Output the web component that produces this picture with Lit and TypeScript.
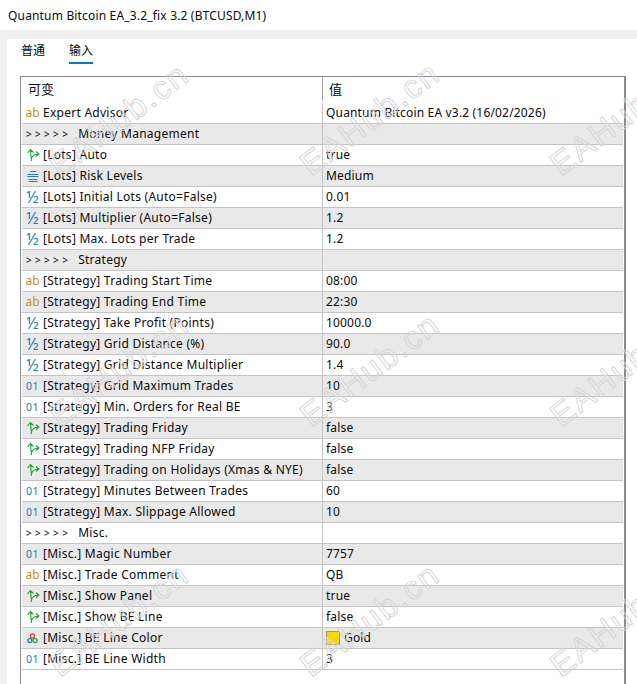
import {html, css, LitElement, svg} from 'lit';
import {customElement} from 'lit/decorators.js';

type Row = {icon: string; name: string; value: string; swatch?: boolean};

const rows: Row[] = [
  {icon: 'ab', name: 'Expert Advisor', value: 'Quantum Bitcoin EA v3.2 (16/02/2026)'},
  {icon: '', name: 'Money Management', value: ''},
  {icon: 'bool', name: '[Lots] Auto', value: 'true'},
  {icon: 'enum', name: '[Lots] Risk Levels', value: 'Medium'},
  {icon: 'half', name: '[Lots] Initial Lots (Auto=False)', value: '0.01'},
  {icon: 'half', name: '[Lots] Multiplier (Auto=False)', value: '1.2'},
  {icon: 'half', name: '[Lots] Max. Lots per Trade', value: '1.2'},
  {icon: '', name: 'Strategy', value: ''},
  {icon: 'ab', name: '[Strategy] Trading Start Time', value: '08:00'},
  {icon: 'ab', name: '[Strategy] Trading End Time', value: '22:30'},
  {icon: 'half', name: '[Strategy] Take Profit (Points)', value: '10000.0'},
  {icon: 'half', name: '[Strategy] Grid Distance (%)', value: '90.0'},
  {icon: 'half', name: '[Strategy] Grid Distance Multiplier', value: '1.4'},
  {icon: '01', name: '[Strategy] Grid Maximum Trades', value: '10'},
  {icon: '01', name: '[Strategy] Min. Orders for Real BE', value: '3'},
  {icon: 'bool', name: '[Strategy] Trading Friday', value: 'false'},
  {icon: 'bool', name: '[Strategy] Trading NFP Friday', value: 'false'},
  {icon: 'bool', name: '[Strategy] Trading on Holidays (Xmas & NYE)', value: 'false'},
  {icon: '01', name: '[Strategy] Minutes Between Trades', value: '60'},
  {icon: '01', name: '[Strategy] Max. Slippage Allowed', value: '10'},
  {icon: '', name: 'Misc.', value: ''},
  {icon: '01', name: '[Misc.] Magic Number', value: '7757'},
  {icon: 'ab', name: '[Misc.] Trade Comment', value: 'QB'},
  {icon: 'bool', name: '[Misc.] Show Panel', value: 'true'},
  {icon: 'bool', name: '[Misc.] Show BE Line', value: 'false'},
  {icon: 'color', name: '[Misc.] BE Line Color', value: 'Gold', swatch: true},
  {icon: '01', name: '[Misc.] BE Line Width', value: '3'},
];

// start points of the rotated watermark text
const marks = [
  [60, 178], [311, 177], [561, 177],
  [60, 428], [311, 428], [561, 428],
  [60, 678], [311, 678], [561, 678],
];

@customElement('app-root')
export class AppRoot extends LitElement {
  static styles = css`
    :host {
      display: block;
      position: relative;
      width: 637px;
      height: 684px;
      overflow: hidden;
      background: #f0f0f0;
      font-family: 'Noto Sans', 'Noto Sans CJK SC', sans-serif;
      font-size: 12px;
      color: #0a0a0a;
    }
    .title {
      height: 30px;
      background: #fff;
      display: flex;
      align-items: center;
      padding-left: 8px;
      letter-spacing: 0.17px;
    }
    .body {
      margin: 9px 0 0 7px;
      height: 645px;
      background: #fff;
      box-sizing: border-box;
      padding-left: 13px;
    }
    .tabs {
      display: flex;
      height: 37px;
      box-sizing: border-box;
      padding: 1px 0 0 1px;
      gap: 24px;
    }
    .tab {
      height: 24px;
      line-height: 22px;
      box-sizing: border-box;
    }
    .tab.on {
      border-bottom: 2px solid #0078d7;
    }
    .table {
      width: 606px;
      height: 640px;
      box-sizing: border-box;
      border: 1px solid #868a91;
      border-width: 1px 2px 0 1px;
      padding-left: 1px;
    }
    .head {
      display: grid;
      grid-template-columns: 300px 1fr;
      height: 26px;
      font-size: 13px;
    }
    .head div {
      padding-left: 6px;
      line-height: 25px;
    }
    .head div + div {
      border-left: 1px solid #a0a0a0;
      height: 24px;
      padding-left: 6px;
    }
    .row {
      display: grid;
      grid-template-columns: 300px 1fr;
      height: 21px;
      box-sizing: border-box;
      border-bottom: 1px solid #c4c4c4;
      margin-right: 1px;
      line-height: 20px;
    }
    .row:nth-child(odd) {
      background: #e9e9e9;
    }
    .name {
      display: flex;
      align-items: center;
      white-space: pre;
      letter-spacing: 0.26px;
    }
    .ico {
      width: 21px;
      height: 20px;
      flex: none;
      display: flex;
      align-items: center;
      justify-content: center;
      letter-spacing: 0;
    }
    .ab { color: #c8922e; font-size: 12px; }
    .num { color: #2a78b0; font-size: 10.5px; letter-spacing: 0.4px; }
    .half { color: #2a78b0; font-size: 16px; }
    .group {
      padding-left: 4px;
    }
    .chevrons {
      font-size: 10px;
      word-spacing: 0.2px;
      margin-right: 10px;
    }
    .val {
      border-left: 1px solid #c4c4c4;
      padding-left: 3px;
      display: flex;
      align-items: center;
      gap: 4px;
      letter-spacing: 0.17px;
    }
    .swatch {
      width: 12px;
      height: 12px;
      background: #ffd700;
      border: 1px solid #a8995c;
    }
    .marks {
      position: absolute;
      left: 0;
      top: 0;
      pointer-events: none;
    }
    .marks text {
      font-family: 'Liberation Sans', sans-serif;
      font-size: 33px;
      letter-spacing: 2px;
      fill: rgba(255, 255, 255, 0.12);
      stroke: #d4d4d4;
      stroke-width: 0.9;
    }
  `;

  renderIcon(icon: string) {
    if (icon === 'ab') return html`<span class="ab">ab</span>`;
    if (icon === '01') return html`<span class="num">01</span>`;
    if (icon === 'half') return html`<span class="half">½</span>`;
    if (icon === 'bool') {
      return html`<svg width="14" height="14" viewBox="0 0 14 14" fill="none" stroke="#1aa83c" stroke-width="1.1">
        <path d="M5.5 13 L4.5 2 M1.5 5 L4.5 1.5 L7.5 4.5 M5.5 10.5 Q6.5 6.5 12.5 6 M10 3.5 L13 6 L10 8.5" />
      </svg>`;
    }
    if (icon === 'enum') {
      return html`<svg width="12" height="12" viewBox="0 0 12 12" fill="none">
        <path d="M3 1.5 H9" stroke="#2a78b0" />
        <path d="M0.5 4.5 H11.5 M0.5 6.5 H11.5" stroke="#2a78b0" />
        <path d="M1.5 9.5 H10.5 M1.5 11.5 H10.5" stroke="#e23a3a" />
      </svg>`;
    }
    if (icon === 'color') {
      return html`<svg width="11" height="11" viewBox="0 0 13 13" fill="none" stroke-width="1.6">
        <circle cx="6.5" cy="3.6" r="2.4" stroke="#d9483b" />
        <circle cx="3.4" cy="9" r="2.4" stroke="#2a78b0" />
        <circle cx="9.6" cy="9" r="2.4" stroke="#2ba84a" />
      </svg>`;
    }
    return null;
  }

  renderRow(r: Row) {
    return html`
      <div class="row">
        <div class="name ${r.icon ? '' : 'group'}">
          ${r.icon
            ? html`<span class="ico">${this.renderIcon(r.icon)}</span>`
            : html`<span class="chevrons">&gt; &gt; &gt; &gt; &gt;</span>`}<span>${r.name}</span>
        </div>
        <div class="val">
          ${r.swatch ? html`<i class="swatch"></i>` : null}<span>${r.value}</span>
        </div>
      </div>
    `;
  }

  render() {
    return html`
      <div class="title">Quantum Bitcoin EA_3.2_fix 3.2 (BTCUSD,M1)</div>
      <div class="body">
        <div class="tabs">
          <div class="tab">普通</div>
          <div class="tab on">输入</div>
        </div>
        <div class="table">
          <div class="head"><div>可变</div><div>值</div></div>
          ${rows.map((r) => this.renderRow(r))}
        </div>
      </div>
      <svg class="marks" width="637" height="684">
        ${marks.map(([x, y]) => svg`<text x=${x} y=${y} transform="rotate(-37 ${x} ${y})">EAHub.cn</text>`)}
      </svg>
    `;
  }
}
